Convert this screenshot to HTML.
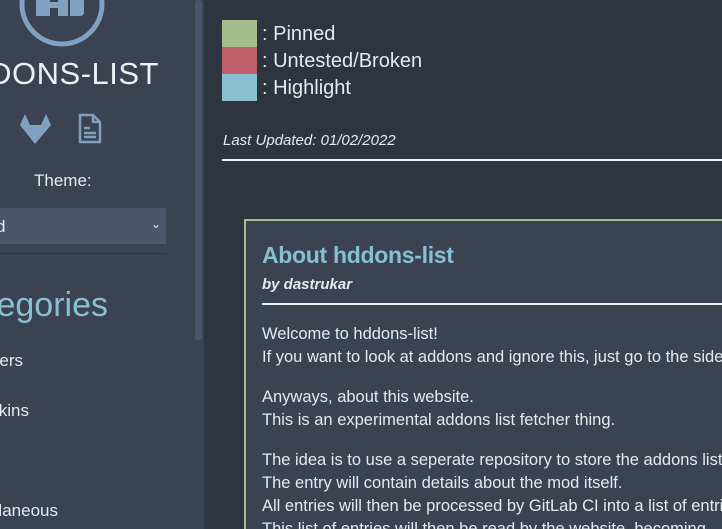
<html style="overflow:hidden;height:529px"><head><style>
body{margin:0;width:722px;height:529px;overflow:hidden;background:#2e3440;font-family:"Liberation Sans",sans-serif;color:#e5e9f0;position:relative}
.a{position:absolute;white-space:nowrap}
</style></head><body>
<div class="a" style="left:0;top:0;width:204px;height:529px;background:#3b4252"></div>
<div class="a" style="left:195px;top:0;width:7px;height:340px;background:#4c566a;border-radius:3px"></div>
<svg class="a" style="left:18px;top:-40px" width="90" height="88"><circle cx="44" cy="44" r="40" fill="none" stroke="#81a1c1" stroke-width="5"/><path d="M18 30h14v12h8V30h10v26H40V48h-8v8H18z M52 30h14v22q0 4-4 4H52z" fill="#81a1c1"/></svg>
<div class="a" style="right:563px;top:56px;font-size:31px;color:#eceff4;letter-spacing:0.5px">HDDONS-LIST</div>
<svg class="a" style="left:18px;top:113px" width="35" height="32"><path d="M2 12L7 1l5 11h11l5-11 5 11-16 19z" fill="#81a1c1"/></svg>
<svg class="a" style="left:77px;top:113px" width="26" height="32"><path d="M3 2h13l7 7v20H3z M16 2v7h7" fill="none" stroke="#81a1c1" stroke-width="2.5" stroke-linejoin="round"/><path d="M7 15h6M7 20h12M7 24h12" stroke="#81a1c1" stroke-width="2.5"/></svg>
<div class="a" style="left:34px;top:171px;font-size:17px">Theme:</div>
<div class="a" style="left:0;top:208px;width:166px;height:36px;background:#4c566a"></div>
<div class="a" style="left:-4px;top:217px;font-size:17px">d</div>
<div class="a" style="left:151px;top:217px;font-size:12px">&#8964;</div>
<div class="a" style="left:0;top:253px;width:166px;height:1px;background:#2e3440"></div>
<div class="a" style="right:614px;top:286px;font-size:34px;color:#88c0d0">Categories</div>
<div class="a" style="right:699px;top:351px;font-size:17px">Pointers</div>
<div class="a" style="right:693px;top:401px;font-size:17px">Skins</div>
<div class="a" style="right:664px;top:501px;font-size:17px">Miscellaneous</div>
<div class="a" style="left:222px;top:20px;width:35px;height:27px;background:#a3be8c"></div>
<div class="a" style="left:222px;top:47px;width:35px;height:27px;background:#bf616a"></div>
<div class="a" style="left:222px;top:74px;width:35px;height:27px;background:#88c0d0"></div>
<div class="a" style="left:262px;top:21px;font-size:20px;line-height:27px">: Pinned<br>: Untested/Broken<br>: Highlight</div>
<div class="a" style="left:223px;top:132px;font-size:15px;font-style:italic">Last Updated: 01/02/2022</div>
<div class="a" style="left:222px;top:159px;width:500px;height:2px;background:#eceff4"></div>
<div class="a" style="left:244px;top:219px;width:490px;height:310px;background:#3b4252;border:2px solid #a3be8c;border-bottom:none;box-sizing:border-box"></div>
<div class="a" style="left:262px;top:242px;font-size:23px;font-weight:bold;color:#88c0d0;letter-spacing:-0.3px">About hddons-list</div>
<div class="a" style="left:262px;top:276px;font-size:15px;font-style:italic;font-weight:bold">by dastrukar</div>
<div class="a" style="left:262px;top:303px;width:460px;height:2px;background:#eceff4"></div>
<div class="a" style="left:262px;top:323px;font-size:16.5px;line-height:23px">Welcome to hddons-list!<br>If you want to look at addons and ignore this, just go to the sidebar.<div style="height:17px"></div>Anyways, about this website.<br>This is an experimental addons list fetcher thing.<div style="height:17px"></div>The idea is to use a seperate repository to store the addons list.<br>The entry will contain details about the mod itself.<br>All entries will then be processed by GitLab CI into a list of entries.<br>This list of entries will then be read by the website, becoming</div>
</body></html>
